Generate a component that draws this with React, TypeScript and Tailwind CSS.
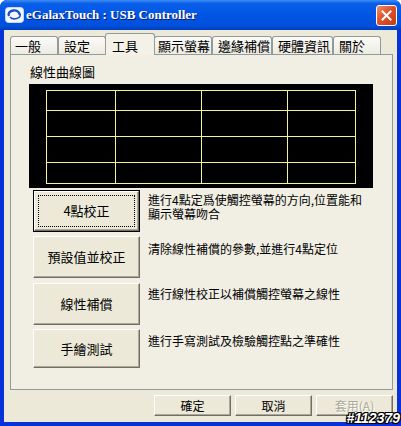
import React from 'react';

const cjk = "font-['Noto_Sans_CJK_TC','Noto_Sans_CJK_SC',sans-serif]";

const tabs = [
  { label: '一般', w: 'w-[48px]', pl: 'pl-[4px]' },
  { label: '設定', w: 'w-[48px]', pl: 'pl-[5px]' },
  { label: '工具', w: 'w-[50px]', pl: 'pl-[6px]', active: true },
  { label: '顯示螢幕', w: 'w-[58px]', pl: 'pl-[3px]' },
  { label: '邊緣補償', w: 'w-[60px]', pl: 'pl-[5px]' },
  { label: '硬體資訊', w: 'w-[61px]', pl: 'pl-[5px]' },
  { label: '關於', w: 'w-[48px]', pl: 'pl-[5px]' },
];

const tools = [
  { label: '4點校正', lines: ['進行4點定爲使觸控螢幕的方向,位置能和', '顯示螢幕吻合'], h: 'h-[42px]', def: true, mt: 'mt-0', tmt: 'mt-[3px]' },
  { label: '預設值並校正', lines: ['清除線性補償的參數,並進行4點定位'], h: 'h-[42px]', mt: 'mt-[4px]', tmt: 'mt-[6px]' },
  { label: '線性補償', lines: ['進行線性校正以補償觸控螢幕之線性'], h: 'h-[42px]', mt: 'mt-[5px]', tmt: 'mt-[4px]' },
  { label: '手繪測試', lines: ['進行手寫測試及檢驗觸控點之準確性'], h: 'h-[39px]', mt: 'mt-[4px]', tmt: 'mt-[5px]' },
];

const bevel =
  'border border-t-white border-l-white border-b-[#716f64] border-r-[#716f64] shadow-[inset_-1px_-1px_0_#aca899] bg-[#ece9d8]';

const AppIcon = () => (
  <svg width="19" height="16" viewBox="0 0 19 16">
    <rect x="0.5" y="0.5" width="18" height="15" rx="3" fill="#f4f7ff" stroke="#c8d6f0" />
    <path d="M4 9 A5.5 4 0 1 1 14.5 8" fill="none" stroke="#1d4fc4" strokeWidth="2.4" />
    <path d="M15 7 A5.5 4 0 0 1 5 10" fill="none" stroke="#1d4fc4" strokeWidth="1.6" />
  </svg>
);

const CloseButton = () => (
  <div className="w-[21px] h-[21px] rounded-[3px] border border-white bg-[linear-gradient(135deg,#f0906e,#e0502a_45%,#c53c16)] flex items-center justify-center">
    <svg width="11" height="11" viewBox="0 0 11 11">
      <path d="M1.5 1.5 L9.5 9.5 M9.5 1.5 L1.5 9.5" stroke="white" strokeWidth="2" strokeLinecap="square" />
    </svg>
  </div>
);

const Chart = () => (
  <div className="ml-[18px] mt-[4px] w-[344px] h-[104px] bg-black">
    <svg width="344" height="104" viewBox="0 0 344 104">
      <g stroke="#f3f39a" strokeWidth="1" fill="none">
        <rect x="17.5" y="6.5" width="309" height="93" />
        <line x1="86.5" y1="6" x2="86.5" y2="100" />
        <line x1="172.5" y1="6" x2="172.5" y2="100" />
        <line x1="258.5" y1="6" x2="258.5" y2="100" />
        <line x1="17" y1="26.5" x2="327" y2="26.5" />
        <line x1="17" y1="52.5" x2="327" y2="52.5" />
        <line x1="17" y1="78.5" x2="327" y2="78.5" />
      </g>
    </svg>
  </div>
);

const ToolButton: React.FC<{ label: string; h: string; def?: boolean }> = ({ label, h, def }) =>
  def ? (
    <div className={`w-[107px] ${h} border border-black shrink-0`}>
      <div className={`w-full h-full ${bevel} p-[3px]`}>
        <div className="w-full h-full border border-dotted border-black flex items-center justify-center text-[13px] text-black">
          {label}
        </div>
      </div>
    </div>
  ) : (
    <div className={`w-[107px] ${h} ${bevel} shrink-0 flex items-center justify-center text-[13px] text-black`}>
      {label}
    </div>
  );

export default function App() {
  return (
    <div className={`w-[401px] h-[426px] bg-[#0831d9] rounded-t-[7px] overflow-hidden flex flex-col relative ${cjk}`}>
      {/* Title bar */}
      <div className="h-[30px] shrink-0 flex items-center pl-[5px] pr-[4px] bg-[linear-gradient(to_bottom,#3d8cf5_0%,#0a5fe9_12%,#0055e5_50%,#0150db_85%,#003fc0_100%)]">
        <AppIcon />
        <span className="ml-[2px] text-white font-bold text-[13px] font-['Liberation_Serif',serif] [text-shadow:1px_1px_0_#0a1c6e]">
          eGalaxTouch : USB Controller
        </span>
        <div className="ml-auto mt-[1px]">
          <CloseButton />
        </div>
      </div>

      {/* Body */}
      <div className="flex-1 mx-[4px] mb-[4px] bg-[#ece9d8] flex flex-col relative">
        {/* Tabs */}
        <div className="flex items-end h-[23px] pl-[6px] mt-[1px]">
          {tabs.map((t) =>
            t.active ? (
              <div
                key={t.label}
                className={`${t.w} ${t.pl} h-[22px] -mx-[1px] z-10 bg-[#f4f2e8] border border-b-0 border-[#919b9c] rounded-t-[3px] flex items-start justify-start pt-[2px] text-[13px] text-black whitespace-nowrap relative top-[1px]`}
              >
                {t.label}
              </div>
            ) : (
              <div
                key={t.label}
                className={`${t.w} ${t.pl} h-[18px] bg-[linear-gradient(to_bottom,#fbfaf6,#ecebe3)] border border-b-0 border-[#919b9c] rounded-t-[3px] flex items-center justify-start text-[13px] text-black whitespace-nowrap overflow-hidden`}
              >
                {t.label}
              </div>
            )
          )}
        </div>

        {/* Panel */}
        <div className="ml-[6px] w-[383px] h-[336px] border border-[#919b9c] bg-[#f1efe4] flex flex-col">
          <div className="ml-[19px] mt-[9px] text-[13px] leading-[16px] text-black">線性曲線圖</div>
          <Chart />
          <div className="flex flex-col ml-[22px] mt-[2px]">
            {tools.map((t) => (
              <div key={t.label} className={`flex items-start ${t.mt}`}>
                <ToolButton label={t.label} h={t.h} def={t.def} />
                <div className={`ml-[8px] text-[12px] leading-[14px] text-black ${t.tmt}`}>
                  {t.lines.map((l) => (
                    <div key={l}>{l}</div>
                  ))}
                </div>
              </div>
            ))}
          </div>
        </div>

        {/* Bottom buttons */}
        <div className="flex justify-end gap-[4px] mt-[5px] pr-[4px]">
          <div className={`w-[77px] h-[21px] ${bevel} flex items-center justify-center text-[12px] text-black`}>確定</div>
          <div className={`w-[77px] h-[21px] ${bevel} flex items-center justify-center text-[12px] text-black`}>取消</div>
          <div className={`w-[77px] h-[21px] ${bevel} flex items-center justify-center text-[12px] text-[#aca899] [text-shadow:1px_1px_0_#ffffff]`}>套用(A)</div>
        </div>
      </div>

      {/* Watermark */}
      <div className="absolute right-[1px] bottom-[1px] text-white font-bold italic text-[14px] leading-[14px] font-['Liberation_Sans',sans-serif] [text-shadow:1px_0_0_#000,-1px_0_0_#000,0_1px_0_#000,0_-1px_0_#000,1px_1px_0_#000,-1px_-1px_0_#000,1px_-1px_0_#000,-1px_1px_0_#000]">
        #112379
      </div>
    </div>
  );
}
